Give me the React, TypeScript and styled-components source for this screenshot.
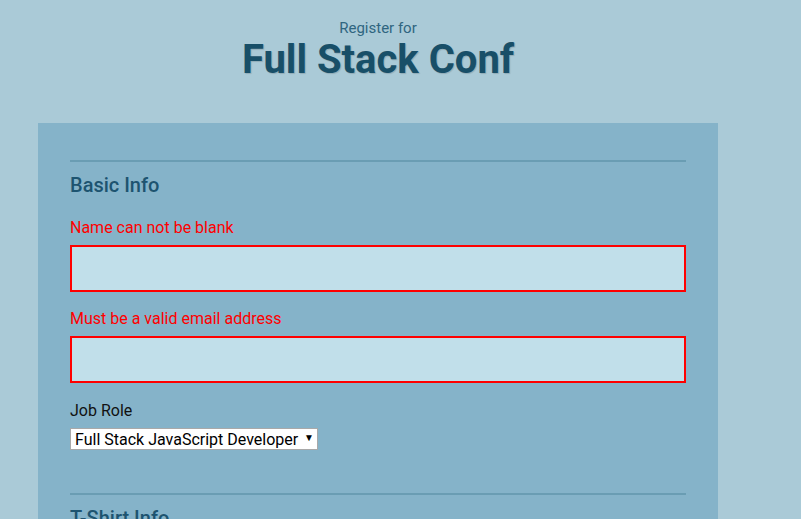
import React from "react";
import styled, { createGlobalStyle } from "styled-components";

const Global = createGlobalStyle`
  html, body { margin: 0; padding: 0; }
  body {
    background: #aacad7;
    font-family: Roboto, "Noto Sans", sans-serif;
  }
`;

const Page = styled.div`
  width: 680px;
  margin-left: 38px;
`;

const Header = styled.header`
  display: flex;
  flex-direction: column;
  align-items: center;
  padding-top: 19px;
  padding-bottom: 40px;
`;

const Kicker = styled.span`
  font-size: 15px;
  color: #2f6580;
  line-height: 18px;
`;

const Title = styled.h1`
  margin: 0;
  font-size: 40px;
  font-weight: 700;
  line-height: 46px;
  color: #184f68;
  text-shadow: 1px 1px 1px rgba(0, 0, 0, 0.15);
`;

const Panel = styled.form`
  background: #85b3c9;
  padding: 37px 32px 0;
  min-height: 420px;
`;

const Fieldset = styled.fieldset`
  border: none;
  border-top: 2px solid #6a9db3;
  margin: 0 0 43px;
  padding: 11px 0 0;
`;

const Legend = styled.h2`
  margin: 0 0 22px;
  font-size: 20px;
  font-weight: 500;
  line-height: 24px;
  color: #1d5470;
`;

const Label = styled.label<{ $error?: boolean }>`
  display: block;
  font-size: 16px;
  line-height: 18px;
  color: ${(p) => (p.$error ? "#ff0000" : "#111")};
  margin: 0 0 8px;
`;

const TextInput = styled.input`
  display: block;
  box-sizing: border-box;
  width: 100%;
  height: 47px;
  margin: 0 0 18px;
  background: #c1dfea;
  border: 2px solid #ff0000;
  outline: none;
`;

const JobBlock = styled.div`
  padding-top: 1px;
`;

const SelectWrap = styled.div`
  position: relative;
  width: 248px;
  height: 22px;
`;

const Select = styled.select`
  appearance: none;
  -webkit-appearance: none;
  box-sizing: border-box;
  width: 100%;
  height: 100%;
  border: 1px solid #a9a9a9;
  border-radius: 0;
  background: #fff;
  color: #000;
  font-family: Roboto, sans-serif;
  font-size: 16px;
  padding: 0 0 0 4px;
`;

const Arrow = styled.span`
  position: absolute;
  right: 4px;
  top: 4px;
  font-size: 10px;
  color: #000;
  pointer-events: none;
`;

export default function App() {
  return (
    <>
      <Global />
      <Page>
        <Header>
          <Kicker>Register for</Kicker>
          <Title>Full Stack Conf</Title>
        </Header>
        <Panel>
          <Fieldset>
            <Legend>Basic Info</Legend>
            <Label $error htmlFor="name">Name can not be blank</Label>
            <TextInput id="name" type="text" />
            <Label $error htmlFor="mail">Must be a valid email address</Label>
            <TextInput id="mail" type="email" />
            <JobBlock>
              <Label htmlFor="title">Job Role</Label>
              <SelectWrap>
                <Select id="title" defaultValue="fsjd">
                  <option value="fsjd">Full Stack JavaScript Developer</option>
                  <option value="fed">Front End Developer</option>
                  <option value="bed">Back End Developer</option>
                </Select>
                <Arrow>▼</Arrow>
              </SelectWrap>
            </JobBlock>
          </Fieldset>
          <Fieldset>
            <Legend>T-Shirt Info</Legend>
          </Fieldset>
        </Panel>
      </Page>
    </>
  );
}
